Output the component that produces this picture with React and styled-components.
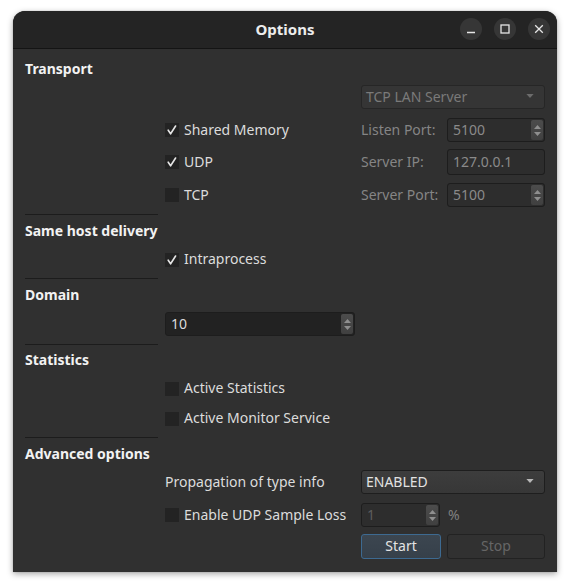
import React from "react";
import styled, { createGlobalStyle } from "styled-components";

const Global = createGlobalStyle`
  html, body { margin: 0; padding: 0; background: #ffffff; }
  body { font-family: "Noto Sans", "DejaVu Sans", sans-serif; }
  * { box-sizing: border-box; }
`;

const Page = styled.div`
  padding: 11px 14px 16px 13px;
`;

const Window = styled.div`
  width: 544px;
  display: flex;
  flex-direction: column;
  border-radius: 12px 12px 0 0;
  overflow: hidden;
  background: #303030;
  box-shadow: 0 2px 6px rgba(0, 0, 0, 0.35), 0 0 1px rgba(0, 0, 0, 0.4);
`;

const TitleBar = styled.div`
  height: 38px;
  display: grid;
  grid-template-columns: 1fr auto 1fr;
  align-items: center;
  background: #242424;
  border-bottom: 1px solid #141414;
  padding-bottom: 1px;
`;

const Title = styled.div`
  grid-column: 2;
  font-size: 15px;
  font-weight: 700;
  color: #ececec;
`;

const WinButtons = styled.div`
  grid-column: 3;
  justify-self: end;
  display: flex;
  gap: 12px;
  padding-right: 7px;
`;

const WinButton = styled.div`
  width: 22px;
  height: 22px;
  border-radius: 50%;
  background: #363636;
  display: flex;
  align-items: center;
  justify-content: center;
`;

const Body = styled.div`
  display: flex;
  flex-direction: column;
  padding: 0 12px 13px 12px;
  font-size: 14px;
  color: #dcdcdc;
`;

const Row = styled.div`
  display: grid;
  grid-template-columns: 140px 196px 86px 98px;
  align-items: center;
  height: ${(p) => p.$h}px;
  margin-top: ${(p) => p.$mt}px;
`;

const Header = styled.div`
  grid-column: 1;
  font-weight: 700;
  font-size: 14px;
  color: #f2f2f2;
  white-space: nowrap;
  line-height: 20px;
  padding-bottom: 2px;
`;

const Separator = styled.div`
  width: 133px;
  height: 1px;
  background: #1c1c1c;
  margin-top: ${(p) => p.$mt}px;
`;

const CheckItem = styled.label`
  grid-column: ${(p) => p.$col || "2"};
  display: flex;
  align-items: center;
  gap: 5px;
  white-space: nowrap;
  color: #dcdcdc;
`;

const CheckText = styled.span`
  padding-bottom: 2px;
`;

const Box = styled.span`
  width: 14px;
  height: 14px;
  background: #232323;
  display: flex;
  align-items: center;
  justify-content: center;
  flex: none;
`;

const FieldLabel = styled.span`
  grid-column: ${(p) => p.$col || "3"};
  color: ${(p) => (p.$disabled ? "#858585" : "#dcdcdc")};
  white-space: nowrap;
  padding-bottom: 2px;
`;

const Field = styled.div`
  grid-column: ${(p) => p.$col};
  width: ${(p) => p.$w}px;
  height: ${(p) => p.$h || 24}px;
  display: flex;
  align-items: stretch;
  border: 1px solid #1d1d1d;
  border-radius: 3px;
  background: ${(p) => (p.$disabled ? "#2d2d2d" : "#222222")};
  overflow: hidden;
`;

const FieldText = styled.span`
  flex: 1;
  display: flex;
  align-items: center;
  padding: 0 0 2px 5px;
  color: ${(p) => (p.$disabled ? "#8a8a8a" : "#dcdcdc")};
  ${(p) => p.$faint && "color: #5e5e5e;"}
`;

const Spin = styled.div`
  width: 12px;
  margin: 1px 1px 1px 0;
  border-radius: 2px;
  background: linear-gradient(#4c4c4c, #404040);
  display: flex;
  flex-direction: column;
  align-items: center;
  justify-content: center;
  gap: 3px;
`;

const Combo = styled.div`
  grid-column: ${(p) => p.$col};
  width: ${(p) => p.$w}px;
  height: 24px;
  display: flex;
  align-items: center;
  justify-content: space-between;
  padding: 0 10px 2px 4px;
  border: 1px solid ${(p) => (p.$disabled ? "#262626" : "#1e1e1e")};
  border-radius: 3px;
  background: ${(p) =>
    p.$disabled ? "#353535" : "linear-gradient(#3d3d3d, #373737)"};
  color: ${(p) => (p.$disabled ? "#7a7a7a" : "#e2e2e2")};
  white-space: nowrap;
`;

const Percent = styled.span`
  grid-column: 4;
  color: #808080;
  padding: 0 0 2px 1px;
`;

const Button = styled.div`
  grid-column: ${(p) => p.$col};
  width: ${(p) => p.$w}px;
  height: 25px;
  display: flex;
  align-items: center;
  justify-content: center;
  padding-bottom: 2px;
  border-radius: 3px;
  border: 1px solid ${(p) => (p.$primary ? "#3d6a91" : "#222222")};
  background: ${(p) =>
    p.$primary ? "linear-gradient(#3c4650, #36404a)" : "#313131"};
  color: ${(p) => (p.$primary ? "#e4e4e4" : "#666666")};
`;

const Arrow = ({ color = "#b5b5b5", w = 9, h = 5 }) => (
  <svg width={w} height={h} viewBox="0 0 9 5">
    <path d="M0 0 H9 L4.5 5 Z" fill={color} />
  </svg>
);

const SpinArrows = () => (
  <Spin>
    <svg width="7" height="4" viewBox="0 0 7 4">
      <path d="M0 4 L3.5 0 L7 4 Z" fill="#8f8f8f" />
    </svg>
    <svg width="7" height="4" viewBox="0 0 7 4">
      <path d="M0 0 L3.5 4 L7 0 Z" fill="#8f8f8f" />
    </svg>
  </Spin>
);

const Check = ({ checked, children, col }) => (
  <CheckItem $col={col}>
    <Box>
      {checked && (
        <svg width="12" height="12" viewBox="0 0 12 12">
          <path
            d="M2.2 6.2 L4.6 9.8 L9.6 2"
            fill="none"
            stroke="#e6e6e6"
            strokeWidth="1.6"
            strokeLinecap="round"
            strokeLinejoin="round"
          />
        </svg>
      )}
    </Box>
    <CheckText>{children}</CheckText>
  </CheckItem>
);

const SpinBox = ({ col, w, value, disabled, faint }) => (
  <Field $col={col} $w={w} $disabled={disabled}>
    <FieldText $disabled={disabled} $faint={faint}>
      {value}
    </FieldText>
    <SpinArrows />
  </Field>
);

export default function App() {
  return (
    <>
      <Global />
      <Page>
        <Window>
          <TitleBar>
            <Title>Options</Title>
            <WinButtons>
              <WinButton>
                <svg width="10" height="10" viewBox="0 0 10 10">
                  <path d="M1 8.5 H9" stroke="#e6e6e6" strokeWidth="1.3" />
                </svg>
              </WinButton>
              <WinButton>
                <svg width="10" height="10" viewBox="0 0 10 10">
                  <rect x="1" y="1" width="8" height="8" fill="none" stroke="#e6e6e6" strokeWidth="1.3" />
                </svg>
              </WinButton>
              <WinButton>
                <svg width="10" height="10" viewBox="0 0 10 10">
                  <path d="M1.2 1.2 L8.8 8.8 M8.8 1.2 L1.2 8.8" stroke="#e6e6e6" strokeWidth="1.3" />
                </svg>
              </WinButton>
            </WinButtons>
          </TitleBar>

          <Body>
            <Row $h={20} $mt={10}>
              <Header>Transport</Header>
            </Row>
            <Row $h={24} $mt={6}>
              <Combo $col="3 / 5" $w={184} $disabled>
                TCP LAN Server
                <Arrow color="#6c6c6c" w={8} h={4} />
              </Combo>
            </Row>
            <Row $h={24} $mt={9}>
              <Check checked>Shared Memory</Check>
              <FieldLabel $disabled>Listen Port:</FieldLabel>
              <SpinBox col={4} w={98} value="5100" disabled />
            </Row>
            <Row $h={26} $mt={7}>
              <Check checked>UDP</Check>
              <FieldLabel $disabled>Server IP:</FieldLabel>
              <Field $col={4} $w={98} $h={26} $disabled>
                <FieldText $disabled>127.0.0.1</FieldText>
              </Field>
            </Row>
            <Row $h={24} $mt={8}>
              <Check>TCP</Check>
              <FieldLabel $disabled>Server Port:</FieldLabel>
              <SpinBox col={4} w={98} value="5100" disabled />
            </Row>
            <Separator $mt={7} />

            <Row $h={20} $mt={6}>
              <Header>Same host delivery</Header>
            </Row>
            <Row $h={20} $mt={8}>
              <Check checked>Intraprocess</Check>
            </Row>
            <Separator $mt={9} />

            <Row $h={20} $mt={6}>
              <Header>Domain</Header>
            </Row>
            <Row $h={24} $mt={7}>
              <SpinBox col={2} w={190} value="10" />
            </Row>
            <Separator $mt={8} />

            <Row $h={20} $mt={5}>
              <Header>Statistics</Header>
            </Row>
            <Row $h={20} $mt={8}>
              <Check>Active Statistics</Check>
            </Row>
            <Row $h={20} $mt={10}>
              <Check>Active Monitor Service</Check>
            </Row>
            <Separator $mt={9} />

            <Row $h={20} $mt={6}>
              <Header>Advanced options</Header>
            </Row>
            <Row $h={24} $mt={6}>
              <FieldLabel $col={2}>Propagation of type info</FieldLabel>
              <Combo $col="3 / 5" $w={184}>
                ENABLED
                <Arrow color="#b8b8b8" w={8} h={4} />
              </Combo>
            </Row>
            <Row $h={24} $mt={9}>
              <Check>Enable UDP Sample Loss</Check>
              <SpinBox col={3} w={79} value="1" disabled faint />
              <Percent>%</Percent>
            </Row>
            <Row $h={25} $mt={7}>
              <Button $col={3} $w={80} $primary>Start</Button>
              <Button $col={4} $w={98}>Stop</Button>
            </Row>
          </Body>
        </Window>
      </Page>
    </>
  );
}
